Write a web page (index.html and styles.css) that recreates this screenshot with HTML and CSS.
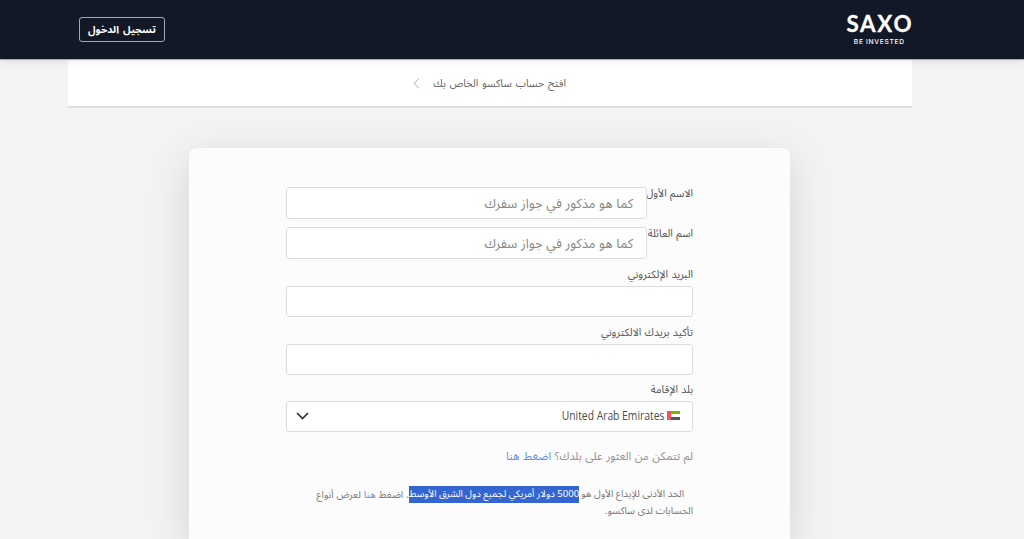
FILE: index.html
```html
<!DOCTYPE html>
<html lang="ar" dir="rtl">
<head>
<meta charset="utf-8">
<title>ساكسو</title>
<link rel="stylesheet" href="styles.css">
</head>
<body>
<header class="header">
  <div class="logo" dir="ltr"><span class="logo-name">SAXO</span><span class="logo-tag">BE INVESTED</span></div>
  <a class="login"><span>تسجيل الدخول</span></a>
</header>
<nav class="nav">
  <span>افتح حساب ساكسو الخاص بك</span>
  <svg class="nav-arrow" viewBox="0 0 7 11" width="7" height="11"><path d="M6 .7 1 5.5 6 10.3"/></svg>
</nav>
<main class="card">
  <div class="row"><label class="label"><span>الاسم الأول</span></label><div class="input"><span>كما هو مذكور في جواز سفرك</span></div></div>
  <div class="row"><label class="label"><span>اسم العائلة</span></label><div class="input"><span>كما هو مذكور في جواز سفرك</span></div></div>
  <div class="field"><label class="label"><span>البريد الإلكتروني</span></label><div class="input"></div></div>
  <div class="field"><label class="label"><span>تأكيد بريدك الالكتروني</span></label><div class="input"></div></div>
  <div class="field"><label class="label"><span>بلد الإقامة</span></label>
    <div class="input select">
      <svg class="flag" viewBox="0 0 13 9" width="13" height="9"><path fill="#fff" d="M0 0h13v9H0z"/><path fill="#73b500" d="M4 0h9v3H4z"/><path fill="#54565f" d="M4 6h9v3H4z"/><path fill="#ff4b55" d="M0 0h4v9H0z"/></svg>
      <span class="country" dir="ltr">United Arab Emirates</span>
      <svg class="chevron" viewBox="0 0 13 8" width="13" height="8"><path d="M1 1l5.5 5.5L12 1"/></svg>
    </div>
  </div>
  <p class="help"><span>لم تتمكن من العثور على بلدك؟ <a>اضغط هنا</a></span></p>
  <div class="note">
    <p class="line first"><span class="lead">الحد الأدنى للإيداع الأول هو</span><mark class="sel"><span>5000 دولار أمريكي لجميع دول الشرق الأوسط</span></mark><span class="tail">. اضغط <a>هنا</a> لعرض أنواع</span></p>
    <p class="line"><span class="lead">الحسابات لدى ساكسو.</span></p>
  </div>
</main>
</body>
</html>
```
FILE: styles.css
```css
* { box-sizing: border-box; }
html { height: 100%; overflow: hidden; }
body {
  margin: 0; height: 100%; overflow: hidden; background: #f2f3f5; color: #555;
  display: flex; flex-direction: column;
  font-family: "Noto Sans Arabic", "DejaVu Sans", sans-serif; font-size: 10px;
}
p { margin: 0; }
span { white-space: nowrap; }
a { color: #5b8fe8; }
.header {
  position: relative; z-index: 1; flex: none; height: 59px; padding: 0 112px 0 79px; background: #121826;
  display: flex; justify-content: space-between; align-items: center;
  box-shadow: 0 1px 0 #a9acb3, 0 2px 8px rgba(0,0,0,.1);
}
.logo { width: 66px; display: flex; flex-direction: column; align-items: center; color: #fff; }
.logo-name { font: 700 22.4px/22px Lato, sans-serif; letter-spacing: 1.7px; margin-right: -1.7px; -webkit-text-stroke: .3px #fff; }
.logo-tag { font: 500 6.7px/9px Inter, sans-serif; letter-spacing: .68px; margin-top: 3px; margin-right: -.6px; }
.login {
  width: 86px; height: 25px; border: 1px solid #a6a8ae; border-radius: 3px; color: #fff;
  display: flex; align-items: center; justify-content: center; font-size: 10.2px; font-weight: bold; word-spacing: 1.5px;
}
.nav {
  flex: none; margin: 0 112px 0 68px; height: 49px; background: #fff; border-bottom: 2px solid #dedfdf;
  display: flex; align-items: center; padding: 1px 346px 0 0; gap: 13px; font-size: 10.6px; word-spacing: .9px; color: #666;
}
.nav-arrow { fill: none; stroke: #aaa; stroke-width: 1; }
.card {
  flex: 1; min-height: 0; width: 601px; margin: 40px 234px 0 0; padding: 39px 97px 0;
  background: #fcfcfc; border-radius: 8px 8px 0 0; box-shadow: 0 12px 42px rgba(0,0,0,.13);
}
.row { display: flex; height: 40px; }
.row .label { width: 46px; height: 13px; }
.row .input { width: 361px; height: 32px; padding-top: 2px; }
.label { display: flex; align-items: center; height: 18px; color: #555; font-size: 10.6px; word-spacing: .6px; padding-bottom: 5px; }
.row .label { padding: 0; }
.input {
  height: 31px; background: #fff; border: 1px solid #dcdcdc; border-radius: 3px;
  display: flex; align-items: center; padding: 0 13px; font-size: 13px; word-spacing: .3px; color: #858585;
}
.field { height: 57.5px; }
.row + .field { margin-top: 1px; }
.select { padding: 0 12px 2px 9px; }
.country {
  font: 12px/16px "Open Sans", sans-serif; word-spacing: 0; color: #4c4c4c; margin-right: 3px;
  transform: scaleX(.86); transform-origin: right center;
}
.chevron { margin-right: auto; fill: none; stroke: #333; stroke-width: 1.7; }
.help { font-size: 11.2px; line-height: 20px; margin-top: 6.5px; word-spacing: .7px; color: #909090; }
.note { margin-top: 18.5px; font-size: 9.8px; color: #777; }
.line { display: flex; height: 17px; line-height: 17px; }
.first { padding-right: 9px; }
.lead { word-spacing: .1px; }
.first .lead { margin-left: 2px; }
.tail { font-size: 9.9px; word-spacing: .4px; }
.sel { background: #3465d0; color: #fff; font-size: 9.6px; }
```
